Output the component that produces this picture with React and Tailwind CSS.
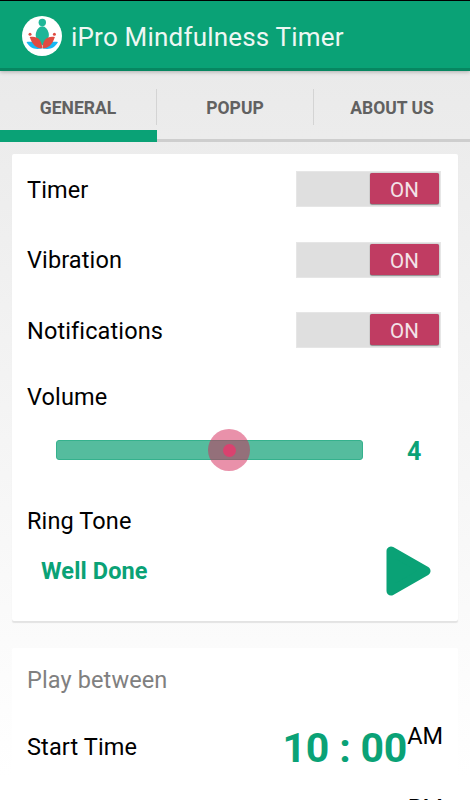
import { useState } from "react";
import clsx from "clsx";

const tabs = ["GENERAL", "POPUP", "ABOUT US"];

const MAX_VOLUME = 7;

function Logo() {
  return (
    <svg className="size-10 shrink-0" viewBox="0 0 40 40">
      <circle cx="20" cy="20" r="20" fill="#fff" />
      <path d="M4.5 26C10 25 16 26.5 20 32.5C12 34 8 32 4.5 26Z" fill="#16b8f3" />
      <path d="M36 26C30.5 25 24.5 26.5 20.5 32.5C28.5 34 32.5 32 36 26Z" fill="#16b8f3" />
      <circle cx="20.3" cy="6.5" r="3.7" fill="#1fb698" />
      <path d="M20.3 10.3C23.5 10.6 25.5 13 26.5 16.5C27.8 20.5 26 25 20.3 29.5C14.6 25 12.8 20.5 14.1 16.5C15.1 13 17.1 10.6 20.3 10.3Z" fill="#1fb698" />
      <path d="M7.7 21C14.500 19.500 20 23 20.2 32.300C14 32.300 10.500 29 7.700 21Z" fill="#e04b41" />
      <path d="M32.9 21C26.1 19.5 20.600 23 20.4 32.3C26.6 32.3 30.1 29 32.9 21Z" fill="#e04b41" />
      <circle cx="8" cy="18.2" r="1.5" fill="#e04b41" />
      <circle cx="32.4" cy="18.2" r="1.5" fill="#e04b41" />
    </svg>
  );
}

function Toggle({ checked, onChange }) {
  return (
    <button
      type="button"
      role="switch"
      aria-checked={checked}
      onClick={() => onChange(!checked)}
      className={clsx(
        "flex h-[36px] w-[145px] border border-[#e6e6e6] bg-[#dfdfdf] px-px pt-px",
        checked ? "justify-end" : "justify-start"
      )}
    >
      <span
        className={clsx(
          "flex h-[31px] w-[69px] items-center justify-center rounded-[2px] pt-[3px] text-[20.5px] leading-none text-[#f3e3e8] shadow-[0_0_1px_#0006,0_1px_1px_#0005]",
          checked ? "bg-[#c03c62]" : "bg-[#999]"
        )}
      >
        {checked ? "ON" : "OFF"}
      </span>
    </button>
  );
}

function SettingRow({ label, checked, onChange }) {
  return (
    <div className="flex h-[70.5px] items-center justify-between">
      <span className="pt-px">{label}</span>
      <Toggle checked={checked} onChange={onChange} />
    </div>
  );
}

function VolumeSlider({ value }) {
  return (
    <div className="relative h-[20px] w-[307px] rounded-[3px] border border-[#35b18d] bg-[#55bc9e]">
      <span
        className="absolute top-1/2 flex size-[42px] -translate-x-1/2 -translate-y-1/2 items-center justify-center rounded-full bg-[#d42456]/50"
        style={{ left: `${(value / MAX_VOLUME) * 100 - 0.6}%` }}
      >
        <span className="size-[13px] rounded-full bg-[#d9426f]" />
      </span>
    </div>
  );
}

function TimeRow({ label, time, period }) {
  return (
    <div className="flex h-[72px] shrink-0 items-start justify-between">
      <span className="pt-[13px]">{label}</span>
      <div className="flex">
        <span className="pt-[3px] text-[41px] leading-[50px] font-bold tracking-[-0.2px] text-[#0aa276]">
          {time}
        </span>
        <span className="pt-[2px] tracking-normal">{period}</span>
      </div>
    </div>
  );
}

export default function App() {
  const [activeTab, setActiveTab] = useState("GENERAL");
  const [settings, setSettings] = useState({
    Timer: true,
    Vibration: true,
    Notifications: true,
  });

  return (
    <div className="flex h-screen w-full flex-col overflow-hidden bg-linear-to-b from-[#e8e8e8] to-white to-[97%] font-['Roboto',sans-serif] text-[23.5px] leading-[28px] text-black">
      <header className="flex h-[71px] shrink-0 items-center gap-[9px] border-t border-b-3 border-t-black border-b-[#078761] bg-[#0aa276] pt-[2px] pl-[22px] shadow-[0_1px_4px_#0004]">
        <Logo />
        <h1 className="pt-[2px] text-[26px] tracking-[0.2px] text-[#eef7f3]">iPro Mindfulness Timer</h1>
      </header>

      <nav className="grid h-[71px] shrink-0 grid-cols-[157px_157px_156px]">
        {tabs.map((tab, i) => (
          <button
            key={tab}
            type="button"
            onClick={() => setActiveTab(tab)}
            className={clsx(
              "flex flex-col justify-between pt-[18px] text-[17.5px] font-bold text-[#616161]",
              tab !== activeTab && "border-b-3 border-[#cecece]"
            )}
          >
            <span
              className={clsx(
                "flex h-[36px] w-full items-center justify-center pt-px",
                i < tabs.length - 1 && "border-r border-[#d4d4d4]"
              )}
            >
              {tab}
            </span>
            {tab === activeTab && <span className="h-[12px] w-full bg-[#0aa276]" />}
          </button>
        ))}
      </nav>

      <main className="flex flex-col gap-[27px] px-[12px] pt-[12px] tracking-[0.12px]">
        <section className="h-[467px] w-[446px] shrink-0 rounded-[2px] bg-white pr-[17px] pl-[15px] shadow-[0_2px_1px_#e3e3e3]">
          {Object.entries(settings).map(([label, checked]) => (
            <SettingRow
              key={label}
              label={label}
              checked={checked}
              onChange={(value) => setSettings({ ...settings, [label]: value })}
            />
          ))}
          <div className="pt-[17px]">Volume</div>
          <div className="mt-[25.5px] flex h-[28px] items-center pl-[29px]">
            <VolumeSlider value={4} />
            <span className="ml-[44px] pt-[3px] text-[25px] font-bold text-[#0aa276]">4</span>
          </div>
          <div className="mt-[42.5px]">Ring Tone</div>
          <div className="mt-[10px] flex h-[52px] items-center justify-between pr-[10px] pl-[14px]">
            <span className="pt-px font-bold text-[#0aa276]">Well Done</span>
            <svg className="h-[50px] w-[45px]" viewBox="0 0 45 50">
              <path d="M5 5V45L40 25Z" fill="#0aa276" stroke="#0aa276" strokeWidth="9" strokeLinejoin="round" />
            </svg>
          </div>
        </section>

        <section className="flex w-[446px] shrink-0 flex-col rounded-[2px] bg-white pt-[18px] pr-[15px] pl-[15px]">
          <div className="mb-[26px] text-[#808080]">Play between</div>
          <TimeRow label="Start Time" time="10 : 00" period="AM" />
          <TimeRow label="End Time" time="10 : 00" period="PM" />
        </section>
      </main>
    </div>
  );
}
